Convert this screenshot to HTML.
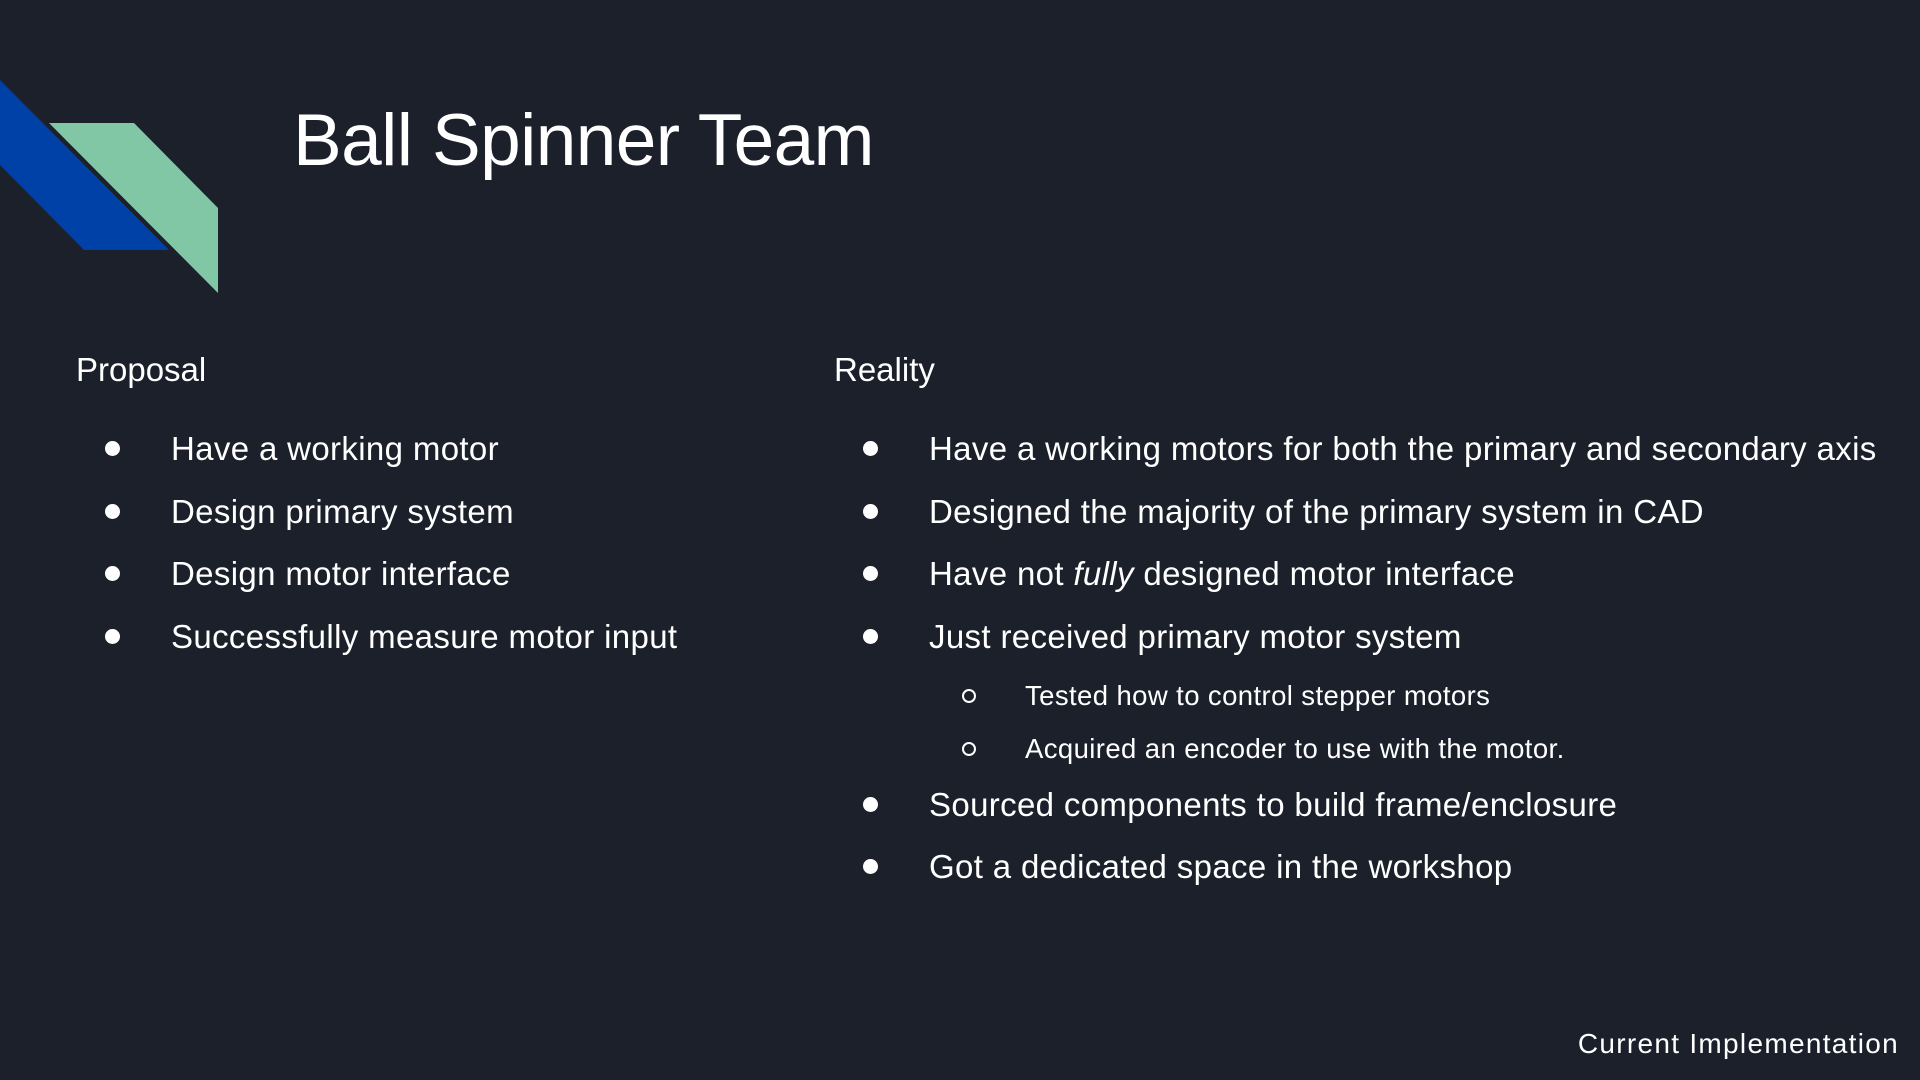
<!DOCTYPE html>
<html><head><meta charset="utf-8"><style>
html,body{margin:0;padding:0}
body{width:1920px;height:1080px;background:#1b202b;position:relative;overflow:hidden;font-family:"Liberation Sans",sans-serif;color:#fff}
.t{position:absolute;white-space:nowrap;line-height:1}
.h1{left:293px;top:104px;font-size:73px;letter-spacing:-0.6px}
.hd{font-size:33px}
.li{font-size:33px;letter-spacing:0.35px}
.sub{font-size:27.5px;letter-spacing:0.4px}
.dot{position:absolute;width:15px;height:15px;border-radius:50%;background:#fff}
.circ{position:absolute;width:10px;height:10px;border-radius:50%;border:2px solid #fff}
</style></head><body>
<svg width="240" height="300" style="position:absolute;left:0;top:0">
<polygon points="0,80 169,250 84,250 0,165" fill="#0041a8"/>
<polygon points="49,123 134,123 218,208 218,293" fill="#82c7a5"/>
</svg>
<div class="t h1">Ball Spinner Team</div>
<div class="t hd" style="left:76px;top:353px">Proposal</div>
<div class="t hd" style="left:834px;top:353px">Reality</div>

<div class="dot" style="left:105px;top:441px"></div><div class="t li" style="left:171px;top:432px">Have a working motor</div>
<div class="dot" style="left:105px;top:504px"></div><div class="t li" style="left:171px;top:495px">Design primary system</div>
<div class="dot" style="left:105px;top:566px"></div><div class="t li" style="left:171px;top:557px">Design motor interface</div>
<div class="dot" style="left:105px;top:629px"></div><div class="t li" style="left:171px;top:620px">Successfully measure motor input</div>

<div class="dot" style="left:863px;top:441px"></div><div class="t li" style="left:929px;top:432px">Have a working motors for both the primary and secondary axis</div>
<div class="dot" style="left:863px;top:504px"></div><div class="t li" style="left:929px;top:495px">Designed the majority of the primary system in CAD</div>
<div class="dot" style="left:863px;top:566px"></div><div class="t li" style="left:929px;top:557px">Have not <i>fully</i> designed motor interface</div>
<div class="dot" style="left:863px;top:629px"></div><div class="t li" style="left:929px;top:620px">Just received primary motor system</div>
<div class="circ" style="left:962px;top:689px"></div><div class="t sub" style="left:1025px;top:682px">Tested how to control stepper motors</div>
<div class="circ" style="left:962px;top:742px"></div><div class="t sub" style="left:1025px;top:735px">Acquired an encoder to use with the motor.</div>
<div class="dot" style="left:863px;top:797px"></div><div class="t li" style="left:929px;top:788px">Sourced components to build frame/enclosure</div>
<div class="dot" style="left:863px;top:859px"></div><div class="t li" style="left:929px;top:850px">Got a dedicated space in the workshop</div>

<div class="t" style="right:21px;top:1030px;font-size:28px;letter-spacing:1.3px">Current Implementation</div>
</body></html>
